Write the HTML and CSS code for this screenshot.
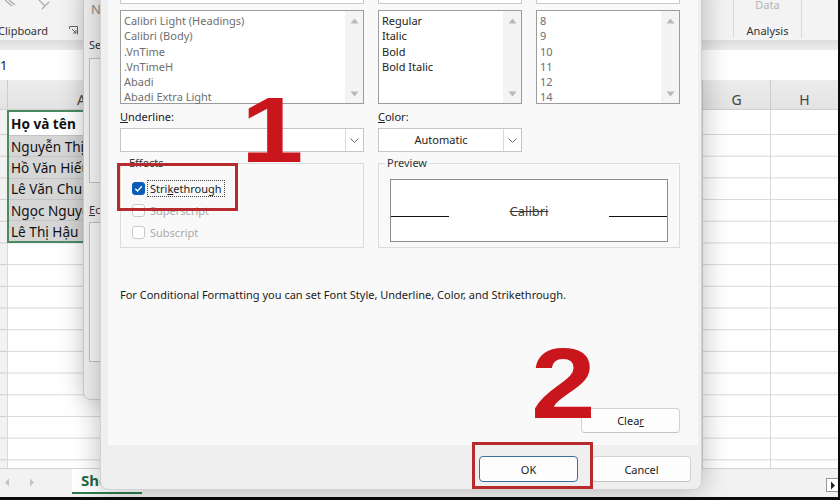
FILE: index.html
```html
<!DOCTYPE html>
<html lang="vi">
<head>
<meta charset="utf-8">
<title>Format Cells</title>
<link rel="stylesheet" href="styles.css">
</head>
<body>
<div class="screen">
  <div class="excel">
    <div class="ribbon">
      <div class="rg clip">
        <div class="ricons">
          <svg width="14" height="9" viewBox="0 0 14 9"><path d="M1 0 L8 6 M5 0 L11 5" stroke="#a8a8a8" stroke-width="1.2" fill="none"/></svg>
          <svg width="16" height="12" viewBox="0 0 16 12"><path d="M3 0 L9 6 L13 2 M9 6 L6 9" stroke="#a8a8a8" stroke-width="1.2" fill="none"/></svg>
        </div>
        <div class="rlabel">
          <span class="cliptxt">Clipboard</span>
          <svg class="launch" width="9" height="9" viewBox="0 0 9 9"><path d="M0.5 0.5 H8.5 V8.5 M0.5 0.5 V3 M3 3 L7 7 M7 4 V7 H4" stroke="#666" stroke-width="1" fill="none"/></svg>
        </div>
      </div>
      <div class="rg analysis">
        <span class="rdata">Data</span>
        <span class="ranal">Analysis</span>
      </div>
    </div>
    <div class="rshade"></div>
    <div class="fbar"><span class="namebox">1</span></div>
    <div class="sheet">
      <div class="colhead">
        <div class="ch rh"></div>
        <div class="ch ca">A</div>
        <div class="ch cm"></div>
        <div class="ch cg">G</div>
        <div class="ch chh">H</div>
      </div>
      <div class="gridbody">
        <div class="col rh"></div>
        <div class="col ca">
          <div class="range">
            <div class="cell head">Họ và tên</div>
            <div class="cell">Nguyễn Thị Mai</div>
            <div class="cell">Hồ Văn Hiếu</div>
            <div class="cell">Lê Văn Chung</div>
            <div class="cell">Ngọc Nguyên</div>
            <div class="cell">Lê Thị Hậu</div>
          </div>
        </div>
        <div class="col cm"></div>
        <div class="col cg"></div>
        <div class="col chh"></div>
      </div>
    </div>
    <div class="tabbar">
      <div class="tabnav">
        <svg width="6" height="9" viewBox="0 0 6 9"><path d="M5 0.5 L1 4.5 L5 8.5 Z" fill="#c4c4c4"/></svg>
        <svg width="6" height="9" viewBox="0 0 6 9"><path d="M1 0.5 L5 4.5 L1 8.5 Z" fill="#c4c4c4"/></svg>
      </div>
      <div class="sheettab">Sheet1</div>
      <div class="hsbtn"><svg width="6" height="9" viewBox="0 0 6 9"><path d="M1 0.5 L5 4.5 L1 8.5 Z" fill="#222"/></svg></div>
    </div>
  </div>

  <div class="dlg back">
    <div class="btitle">N</div>
    <div class="blbl">Se</div>
    <div class="bbox one"></div>
    <div class="blbl two"><u>E</u>c</div>
    <div class="bbox tall"></div>
  </div>

  <div class="dlg main">
    <div class="panel">
      <div class="g3 fontrow">
        <div class="fcol">
          <div class="inp"></div>
          <div class="list">
            <div class="items grey">
              <div>Calibri Light (Headings)</div>
              <div>Calibri (Body)</div>
              <div>.VnTime</div>
              <div>.VnTimeH</div>
              <div>Abadi</div>
              <div>Abadi Extra Light</div>
            </div>
            <div class="sb">
              <svg width="9" height="6" viewBox="0 0 9 6"><path d="M4.5 0.5 L8.5 5.5 H0.5 Z" fill="#b9b9b9"/></svg>
              <svg width="9" height="6" viewBox="0 0 9 6"><path d="M0.5 0.5 H8.5 L4.5 5.5 Z" fill="#b9b9b9"/></svg>
            </div>
          </div>
        </div>
        <div class="fcol">
          <div class="inp"></div>
          <div class="list">
            <div class="items">
              <div>Regular</div>
              <div>Italic</div>
              <div>Bold</div>
              <div>Bold Italic</div>
            </div>
            <div class="sb">
              <svg width="9" height="6" viewBox="0 0 9 6"><path d="M4.5 0.5 L8.5 5.5 H0.5 Z" fill="#b9b9b9"/></svg>
              <svg width="9" height="6" viewBox="0 0 9 6"><path d="M0.5 0.5 H8.5 L4.5 5.5 Z" fill="#b9b9b9"/></svg>
            </div>
          </div>
        </div>
        <div class="fcol">
          <div class="inp"></div>
          <div class="list">
            <div class="items grey">
              <div>8</div>
              <div>9</div>
              <div>10</div>
              <div>11</div>
              <div>12</div>
              <div>14</div>
            </div>
            <div class="sb">
              <svg width="9" height="6" viewBox="0 0 9 6"><path d="M4.5 0.5 L8.5 5.5 H0.5 Z" fill="#b9b9b9"/></svg>
              <svg width="9" height="6" viewBox="0 0 9 6"><path d="M0.5 0.5 H8.5 L4.5 5.5 Z" fill="#b9b9b9"/></svg>
            </div>
          </div>
        </div>
      </div>

      <div class="g3 selrow">
        <div class="field">
          <div class="lbl"><u>U</u>nderline:</div>
          <div class="sel">
            <span class="val"></span>
            <span class="chev"><svg width="9" height="5" viewBox="0 0 9 5"><path d="M0.5 0.5 L4.5 4.5 L8.5 0.5" stroke="#666" fill="none"/></svg></span>
          </div>
        </div>
        <div class="field">
          <div class="lbl"><u>C</u>olor:</div>
          <div class="sel">
            <span class="val center">Automatic</span>
            <span class="chev"><svg width="9" height="5" viewBox="0 0 9 5"><path d="M0.5 0.5 L4.5 4.5 L8.5 0.5" stroke="#666" fill="none"/></svg></span>
          </div>
        </div>
      </div>

      <div class="g3 grprow">
        <fieldset class="grp effects">
          <legend>Effects</legend>
          <div class="chkrow">
            <span class="chk on"><svg width="13" height="13" viewBox="0 0 13 13"><path d="M3.3 6.7 L5.6 9 L9.8 4.3" stroke="#fff" stroke-width="1.3" fill="none"/></svg></span>
            <span class="clabel focus">Stri<u>k</u>ethrough</span>
          </div>
          <div class="chkrow off">
            <span class="chk"></span>
            <span class="clabel">Superscript</span>
          </div>
          <div class="chkrow off">
            <span class="chk"></span>
            <span class="clabel">Subscript</span>
          </div>
        </fieldset>
        <fieldset class="grp preview">
          <legend>Preview</legend>
          <div class="pbox">
            <span class="pline"></span>
            <span class="ptxt">Calibri</span>
            <span class="pline"></span>
          </div>
        </fieldset>
      </div>

      <p class="note">For Conditional Formatting you can set Font Style, Underline, Color, and Strikethrough.</p>

      <div class="clearrow"><button class="btn">Clea<u>r</u></button></div>
    </div>
    <div class="footer">
      <button class="btn ok">OK</button>
      <button class="btn">Cancel</button>
    </div>
  </div>

  <div class="mark box1"></div>
  <div class="mark box2"></div>
  <div class="num n1">1</div>
  <div class="num n2">2</div>
</div>
</body>
</html>
```

FILE: styles.css
```css
* { box-sizing: border-box; }
html, body { margin: 0; padding: 0; }
body {
  width: 840px;
  height: 500px;
  overflow: hidden;
  background: #000;
  font-family: "Noto Sans", "Liberation Sans", sans-serif;
}
.screen {
  position: relative;
  width: 840px;
  height: 500px;
  overflow: hidden;
  background: #0b0b0b;
}

/* ---------- Excel window ---------- */
.excel {
  width: 838px;
  height: 497px;
  display: flex;
  flex-direction: column;
  background: #f3f3f3;
  overflow: hidden;
}
.ribbon {
  height: 40px;
  display: flex;
  background: #f3f3f3;
  color: #333;
  font-size: 11px;
}
.clip {
  width: 83px;
  display: flex;
  flex-direction: column;
  justify-content: space-between;
  padding-bottom: 2px;
}
.ricons { display: flex; gap: 18px; padding-left: 4px; }
.rlabel { display: flex; align-items: center; height: 16px; }
.cliptxt { margin-left: -2px; }
.launch { margin-left: auto; margin-right: 5px; }
.analysis {
  margin-left: auto;
  margin-right: 36px;
  width: 69px;
  height: 38px;
  border-left: 1px solid #d8d8d8;
  border-right: 1px solid #d8d8d8;
  display: flex;
  flex-direction: column;
  align-items: center;
  justify-content: space-between;
}
.rdata { color: #b4b4b4; line-height: 14px; margin-top: -2px; }
.ranal { line-height: 14px; color: #333; }
.rshade { height: 10px; background: linear-gradient(#dedede, #ececec); }
.fbar {
  height: 30px;
  background: #fff;
  display: flex;
  align-items: center;
  font-size: 13px;
  color: #222;
}
.namebox { margin-left: 0; }

.sheet { flex: 1; display: flex; flex-direction: column; background: #fff; }
.colhead {
  height: 30px;
  display: flex;
  background: linear-gradient(#ececec, #e3e3e3);
  border-bottom: 1px solid #cfcfcf;
}
.ch {
  border-right: 1px solid #cdcdcd;
  font-size: 14px;
  color: #444;
  text-align: center;
  line-height: 20px;
  padding-top: 10px;
}
.rh { width: 8px; flex: none; }
.ca { width: 148px; flex: none; }
.cm { width: 547px; flex: none; }
.cg { width: 68px; flex: none; }
.chh { width: 67px; flex: none; border-right: none; }

.gridbody {
  flex: 1;
  display: flex;
  background:
    linear-gradient(#fff, #fff) 0 0 / 100% 24px no-repeat,
    linear-gradient(to bottom, transparent 20.7px, #d8d8d8 20.7px) 0 3.3px / 100% 21.7px repeat-y,
    #fff;
}
.col { border-right: 1px solid #d8d8d8; }
.col.rh { background: rgba(0, 0, 0, 0.05); }
.col.chh { border-right: none; }
.range {
  border: 2px solid #4c8b62;
  margin-left: -1px;
  width: 160px;
}
.cell {
  height: 21.3px;
  display: flex;
  align-items: center;
  padding-left: 2px;
  font-size: 13.6px;
  color: #111;
  background: #d6d6d6;
  border-top: 1px solid #c4c4c4;
  white-space: nowrap;
}
.cell.head {
  height: 23px;
  background: #fff;
  font-weight: 700;
  border-top: none;
}

.tabbar {
  height: 29px;
  display: flex;
  align-items: flex-start;
  background: #f2f2f2;
  border-top: 1px solid #d4d4d4;
}
.tabnav { width: 72px; display: flex; gap: 19px; padding: 9px 0 0 4px; }
.sheettab {
  width: 70px;
  height: 25px;
  background: #fff;
  border-bottom: 2px solid #2f7a4c;
  color: #1f6b41;
  font-weight: 700;
  font-size: 15px;
  line-height: 22px;
  padding-left: 9px;
}
.hsbtn {
  margin-left: auto;
  margin-top: 9px;
  width: 12px;
  height: 14px;
  background: #fff;
  border: 1px solid #999;
  border-right: none;
  display: flex;
  align-items: center;
  justify-content: center;
}

/* ---------- dialogs ---------- */
.dlg { position: absolute; }
.back {
  left: 83px;
  top: -12px;
  width: 200px;
  height: 412px;
  z-index: 1;
  background: #f1f1f1;
  border: 1px solid #cbcbcb;
  border-radius: 8px;
  box-shadow: 0 0 26px rgba(0, 0, 0, 0.22);
  padding: 12px 0 0 5px;
  font-size: 11px;
  color: #333;
}
.btitle { font-size: 13px; line-height: 16px; color: #8d8d8d; margin-left: 2px; }
.blbl { line-height: 14px; margin-top: 21px; }
.blbl.two { margin-top: 20px; }
.bbox {
  margin-top: 6px;
  height: 125px;
  background: #fafafa;
  border: 1px solid #c4c4c4;
}
.bbox.tall { margin-top: 5px; height: 140px; }

.main {
  left: 100px;
  top: -26px;
  width: 602px;
  height: 516px;
  z-index: 2;
  background: #efefef;
  border: 1px solid #d2d2d2;
  border-top: none;
  border-radius: 0 0 8px 8px;
  box-shadow: 0 0 28px rgba(0, 0, 0, 0.28);
  padding: 0 3px 0 7px;
  display: flex;
  flex-direction: column;
  font-size: 11px;
  color: #1b1b1b;
}
.panel {
  flex: 1;
  background: #f9f9f9;
  padding: 7px 18px 12px 12px;
  display: flex;
  flex-direction: column;
}
.g3 {
  display: grid;
  grid-template-columns: 244px 144px 144px;
  column-gap: 14px;
}
.inp { height: 23px; background: #fff; border: 1px solid #c9c9c9; }
.list {
  margin-top: 6px;
  height: 94px;
  background: #fff;
  border: 1px solid #9c9c9c;
  display: flex;
}
.items { flex: 1; padding: 2px 0 0 3px; line-height: 15.3px; color: #222; }
.items.grey { color: #6e6e6e; }
.sb {
  width: 18px;
  background: #f4f4f4;
  display: flex;
  flex-direction: column;
  align-items: center;
  justify-content: space-between;
  padding: 7px 0 6px;
}

.selrow { margin-top: 6px; }
.lbl { line-height: 14px; color: #222; }
.sel {
  margin-top: 4px;
  height: 24px;
  background: #fff;
  border: 1px solid #c6c6c6;
  display: flex;
}
.val { flex: 1; line-height: 22px; }
.val.center { text-align: center; color: #222; }
.chev {
  width: 18px;
  border-left: 1px solid #dadada;
  display: flex;
  align-items: center;
  justify-content: center;
}

.grprow { margin-top: 4px; }
.grp {
  margin: 0;
  min-width: 0;
  height: 92px;
  border: 1px solid #dcdcdc;
  padding: 7px 11px 0 11px;
}
.grp legend {
  padding: 0 2px;
  margin-left: -5px;
  line-height: 14px;
  color: #333;
}
.preview { grid-column: 2 / 4; padding-top: 9px; }
.chkrow { height: 22px; display: flex; align-items: center; }
.chk {
  width: 13px;
  height: 13px;
  border: 1px solid #c9c9c9;
  border-radius: 3px;
  background: #fff;
  margin-right: 3px;
  flex: none;
}
.chk.on { background: #0b5cb8; border-color: #0b5cb8; }
.chk.on svg { display: block; margin: -1px; }
.clabel { padding: 1px 2px; line-height: 13px; color: #1b1b1b; }
.clabel.focus { outline: 1px dotted #444; }
.chkrow.off .clabel { color: #a9a9a9; }

.pbox {
  height: 63px;
  background: #fff;
  border: 1px solid #8c8c8c;
  display: flex;
  align-items: center;
}
.pline {
  width: 58px;
  height: 1px;
  background: #111;
  margin-top: 11px;
  flex: none;
}
.ptxt {
  flex: 1;
  text-align: center;
  font-size: 13px;
  color: #3c3c3c;
  text-decoration: line-through;
}

.note { margin: 39px 0 0; line-height: 16px; color: #1b1b1b; }
.clearrow { margin-top: auto; display: flex; justify-content: flex-end; }
.btn {
  width: 99px;
  height: 25px;
  background: #fdfdfd;
  border: 1px solid #d2d2d2;
  border-bottom-color: #c4c4c4;
  border-radius: 4px;
  font-family: "Noto Sans", "Liberation Sans", sans-serif;
  font-size: 11px;
  color: #1b1b1b;
  padding: 0;
}
.footer {
  height: 44px;
  display: flex;
  justify-content: flex-end;
  align-items: flex-start;
  gap: 14px;
  padding: 11px 7px 0 0;
}
.footer .btn { height: 26px; }
.btn.ok { border: 1px solid #3d6e9e; box-shadow: inset 0 0 0 1px #fff; }

/* ---------- annotations ---------- */
.mark {
  position: absolute;
  z-index: 3;
  border: 3px solid #b72a2e;
}
.box1 { left: 117px; top: 163px; width: 121px; height: 48px; }
.box2 { left: 472px; top: 442px; width: 121px; height: 47px; }
.num {
  position: absolute;
  z-index: 3;
  font-family: "Liberation Sans", Arial, sans-serif;
  font-weight: 700;
  color: #c8161c;
  line-height: 1;
  transform-origin: left top;
}
.n1 { left: 241px; top: 84px; font-size: 92px; transform: scaleX(1.22); }
.n2 { left: 531px; top: 333px; font-size: 101px; transform: scaleX(1.15); }
```
